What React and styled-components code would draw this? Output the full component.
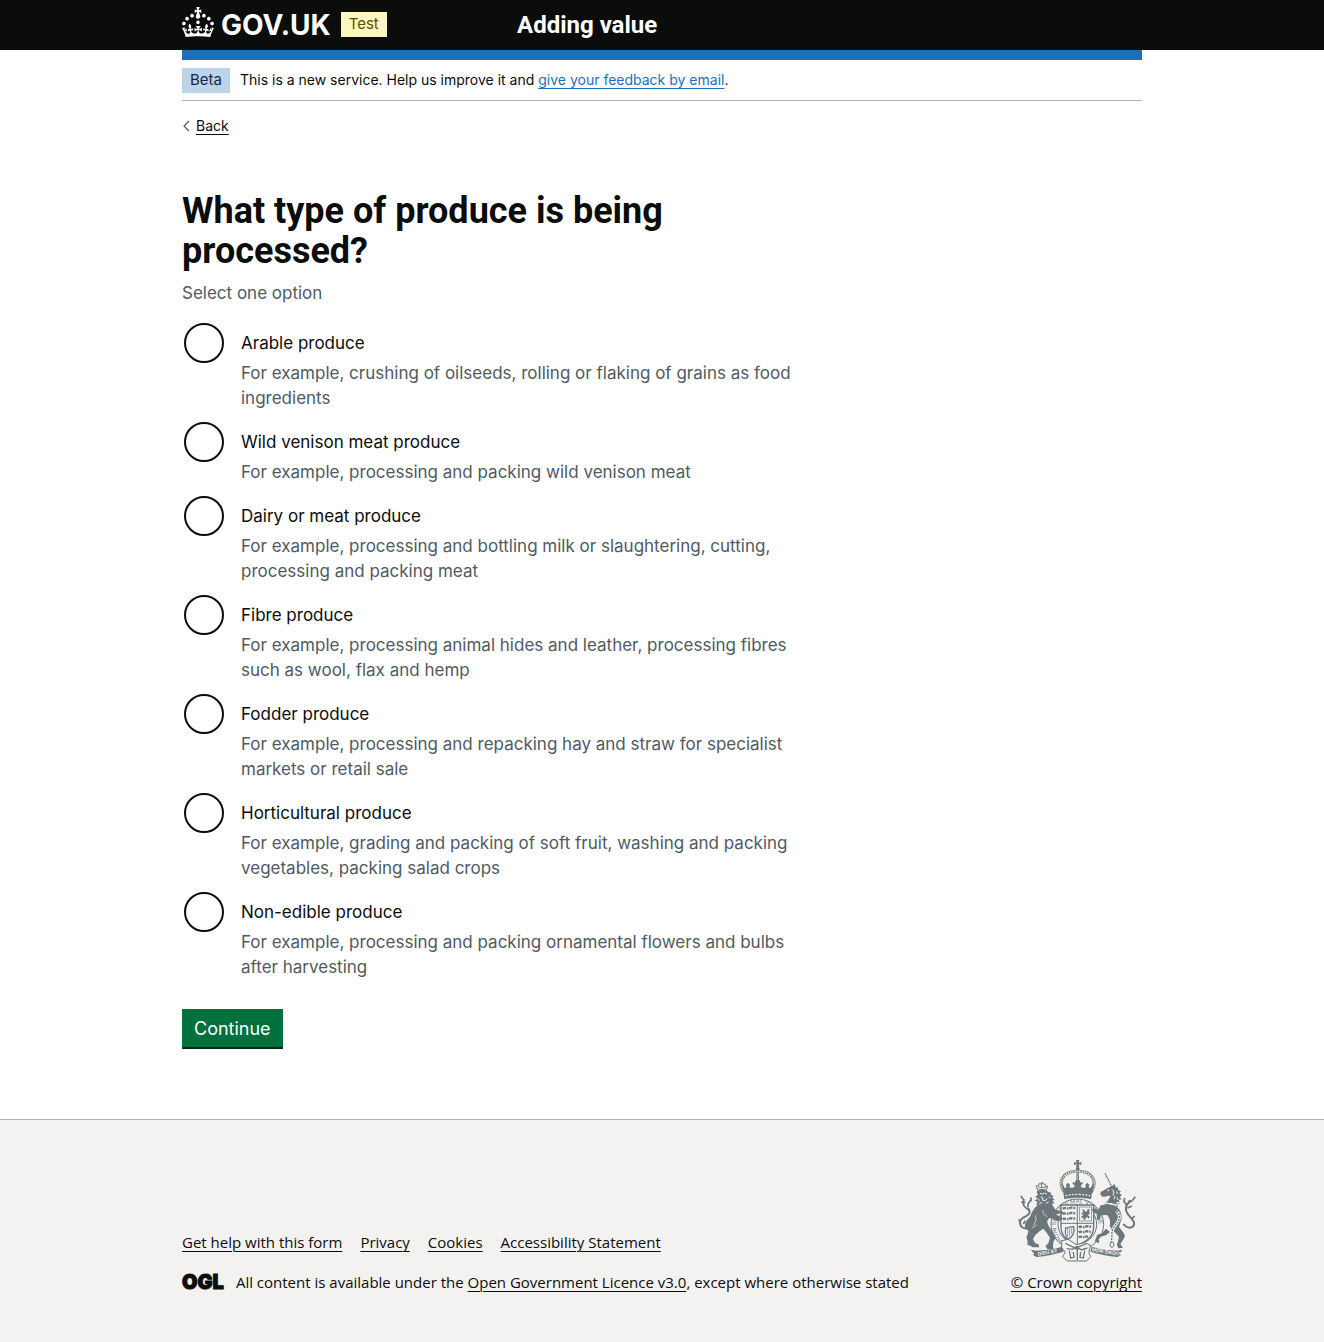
import React from "react";
import styled, { createGlobalStyle, css } from "styled-components";

const c = {
  black: "#0b0c0c",
  blue: "#1d70b8",
  grey: "#505a5f",
  border: "#b1b4b6",
  footer: "#f3f2f1",
  green: "#00703c",
  greenDark: "#002d18",
  arms: "#6b777b",
};
const sans = '"Inter", "Liberation Sans", sans-serif';
const display = '"Roboto", "Liberation Sans", sans-serif';
const footerSans = '"Open Sans", "Liberation Sans", sans-serif';

const GlobalStyle = createGlobalStyle`
  *, *::before, *::after { box-sizing: border-box; }
  body {
    margin: 0;
    background: #fff;
    color: ${c.black};
    font-family: ${sans};
    font-size: 17px;
    line-height: 25px;
  }
`;

const small = css`
  font-size: 14px;
  line-height: 20px;
`;

const Page = styled.div`
  display: flex;
  flex-direction: column;
  min-height: 100vh;
`;

const Container = styled.div`
  max-width: 960px;
  margin: 0 auto;
  @media (max-width: 1020px) {
    margin: 0 30px;
  }
`;

const Header = styled.header`
  background: ${c.black};
  color: #fff;
`;

const HeaderRow = styled(Container)`
  display: flex;
  align-items: center;
  min-height: 50px;
`;

const HeaderLogo = styled.div`
  display: flex;
  align-items: center;
  flex: 0 0 335px;
`;

const HomeLink = styled.a`
  display: flex;
  align-items: center;
  gap: 7px;
  color: #fff;
  text-decoration: none;
  svg {
    display: block;
    margin-bottom: 6px;
  }
`;

const Wordmark = styled.span`
  font-size: 28px;
  line-height: 30px;
  font-weight: 700;
`;

const ServiceName = styled.a`
  color: #fff;
  font-family: ${display};
  font-size: 24px;
  line-height: 30px;
  font-weight: 700;
  text-decoration: none;
`;

const Tag = styled.strong`
  flex: none;
  padding: 2px 8px 3px;
  font-size: 15px;
  line-height: 20px;
  font-weight: 400;
  color: ${(p) => (p.$tone === "yellow" ? "#594d00" : "#0c2d4a")};
  background: ${(p) => (p.$tone === "yellow" ? "#fff7bf" : "#bbd4ea")};
  margin: ${(p) => (p.$tone === "yellow" ? "0 0 1px 10px" : "0")};
`;

const BlueBar = styled(Container)`
  height: 10px;
  background: ${c.blue};
`;

const BlueBarWrap = styled.div`
  background: #fff;
`;

const PhaseBanner = styled.div`
  ${small}
  display: flex;
  align-items: flex-start;
  gap: 10px;
  padding: 8px 0 7px;
  border-bottom: 1px solid ${c.border};
`;

const PhaseText = styled.span`
  padding-top: 2px;
`;

const Link = styled.a`
  color: ${(p) => (p.$blue ? c.blue : c.black)};
  text-decoration: underline;
  text-decoration-thickness: 1px;
  text-underline-offset: 3px;
`;

const BackLink = styled(Link)`
  ${small}
  display: inline-flex;
  align-items: center;
  gap: 4px;
  margin-top: 15px;
  text-decoration: none;
  span {
    text-decoration: underline;
    text-decoration-thickness: 1px;
    text-underline-offset: 3px;
  }
`;

const Main = styled.main`
  display: block;
  max-width: 630px;
  padding: 51px 0 70px;
`;

const Fieldset = styled.fieldset`
  margin: 0;
  padding: 0;
  border: 0;
  min-width: 0;
`;

const Legend = styled.legend`
  padding: 0;
  margin: 0 0 10px;
`;

const Title = styled.h1`
  max-width: 600px;
  margin: 0;
  font-family: ${display};
  font-size: 36px;
  line-height: 40px;
  font-weight: 700;
`;

const Hint = styled.div`
  color: ${c.grey};
`;

const Radios = styled.div`
  display: flex;
  flex-direction: column;
  gap: 10px;
  margin: 16px 0 29px;
`;

const RadioItem = styled.div`
  display: grid;
  grid-template-columns: 44px 1fr;
  column-gap: 15px;
  grid-template-rows: 39px auto;
`;

const Radio = styled.input`
  appearance: none;
  width: 40px;
  height: 40px;
  margin: 1px 2px 0;
  border: 2px solid ${c.black};
  border-radius: 50%;
  background: #fff;
  cursor: pointer;
  &:checked {
    box-shadow: inset 0 0 0 8px #fff;
    background: ${c.black};
  }
  &:focus {
    outline: 3px solid #ffdd00;
  }
`;

const RadioLabel = styled.label`
  padding: 9px 0 5px;
  cursor: pointer;
`;

const RadioHint = styled(Hint)`
  grid-column: 2;
`;

const Button = styled.button`
  display: block;
  padding: 7px 12px 6px;
  border: 0;
  border-bottom: 2px solid ${c.greenDark};
  background: ${c.green};
  color: #fff;
  font-family: ${sans};
  font-size: 18px;
  line-height: 25px;
  cursor: pointer;
`;

const Footer = styled.footer`
  flex: 1;
  padding: 40px 0 50px;
  border-top: 1px solid ${c.border};
  background: ${c.footer};
  font-family: ${footerSans};
  font-size: 15px;
  line-height: 20px;
`;

const FooterRow = styled(Container)`
  display: flex;
  flex-wrap: wrap;
  align-items: flex-end;
  justify-content: space-between;
  gap: 20px;
`;

const FooterLinks = styled.ul`
  display: flex;
  flex-wrap: wrap;
  gap: 18px;
  margin: 0 0 20px;
  padding: 0;
  list-style: none;
`;

const Licence = styled.div`
  display: flex;
  align-items: center;
  gap: 12px;
`;

const Ogl = styled.span`
  font-family: ${sans};
  font-size: 20px;
  line-height: 20px;
  font-weight: 900;
  -webkit-text-stroke: 1px ${c.black};
`;

const Copyright = styled(Link)`
  display: flex;
  flex-direction: column;
  align-items: center;
  gap: 10px;
`;

const Crown = () => (
  <svg width="32" height="30" viewBox="0 0 32 30" fill="currentColor" aria-hidden="true">
    <path d="M22.6 10.4c-1 .4-2-.1-2.4-1-.4-.9.1-2 1-2.4.9-.4 2 .1 2.4 1s-.1 2-1 2.4m-5.9 6.7c-.9.4-2-.1-2.4-1-.4-.9.1-2 1-2.4.9-.4 2 .1 2.4 1s-.1 2-1 2.4m10.8-3.7c-1 .4-2-.1-2.4-1-.4-.9.1-2 1-2.4.9-.4 2 .1 2.4 1s0 2-1 2.4m3.3 4.8c-1 .4-2-.1-2.4-1-.4-.9.1-2 1-2.4.9-.4 2 .1 2.4 1s-.1 2-1 2.4M17 4.7l2.3 1.2V2.5l-2.3.7-.2-.2.9-3h-3.4l.9 3-.2.2c-.1.1-2.3-.7-2.3-.7v3.4L15 4.7c.1.1.1.2.2.2l-1.3 4c-.1.2-.1.4-.1.6 0 1.1.8 2 1.9 2.2h.7c1-.2 1.9-1.1 1.9-2.1 0-.2 0-.4-.1-.6l-1.3-4c-.1-.2 0-.2.1-.3m-7.6 5.7c.9.4 2-.1 2.4-1 .4-.9-.1-2-1-2.4-.9-.4-2 .1-2.4 1s0 2 1 2.4m-5 3c.9.4 2-.1 2.4-1 .4-.9-.1-2-1-2.4-.9-.4-2 .1-2.4 1s.1 2 1 2.4m-3.2 4.8c.9.4 2-.1 2.4-1 .4-.9-.1-2-1-2.4-.9-.4-2 .1-2.4 1s0 2 1 2.4m14.8 11c4.4 0 8.6.3 12.3.8 1.1-4.5 2.4-7 3.7-8.8l-2.5-.9c.2 1.3.3 1.9 0 2.7-.4-.4-.8-1.1-1.1-2.3l-1.2 4c.7-.5 1.3-.8 2-.9-1.1 2.5-2.6 3.1-3.5 3-1.1-.2-1.7-1.2-1.5-2.1.3-1.2 1.5-1.5 2.1-.1 1.1-2.3-.8-3-2-2.3 1.9-1.9 2.1-3.5.6-5.6-2.1 1.6-2.1 3.2-1.2 5.5-1.2-1.4-3.2-.6-2.5 1.6.9-1.4 2.1-.5 1.9.8-.2 1.1-1.7 2.1-3.5 1.9-2.7-.2-2.9-2.1-2.9-3.6.7-.1 1.9.5 2.9 1.9l.4-4.3c-1.1 1.1-2.1 1.4-3.2 1.4.4-1.2 2.1-3 2.1-3h-5.4s1.7 1.9 2.1 3c-1.1 0-2.1-.2-3.2-1.4l.4 4.3c1-1.4 2.2-2 2.9-1.9-.1 1.5-.2 3.4-2.9 3.6-1.9.2-3.4-.8-3.5-1.9-.2-1.3 1-2.2 1.9-.8.7-2.3-1.2-3-2.5-1.6.9-2.2.9-3.9-1.2-5.5-1.5 2-1.3 3.7.6 5.6-1.2-.7-3.1 0-2 2.3.6-1.4 1.8-1.1 2.1.1.2.9-.3 1.9-1.5 2.1-.9.2-2.4-.5-3.5-3 .6 0 1.2.3 2 .9l-1.2-4c-.3 1.1-.7 1.9-1.1 2.3-.3-.8-.2-1.4 0-2.7l-2.9.9C1.3 23 2.6 25.5 3.7 30c3.7-.5 7.9-.8 12.3-.8" />
  </svg>
);

const RoyalArms = () => (
  <svg width="125" height="102" viewBox="42 30 375 306" fill={c.arms} aria-hidden="true">
    {/* imperial crown */}
    <path d="M228 30h10l-2 8 8-2v9l-8-2 2 9h-10l2-9-8 2v-9l8 2z" />
    <circle cx="233" cy="57" r="6" />
    <g fill="none">
      <path d="M192 126C172 92 190 66 228 64M274 126C294 92 276 66 238 64" stroke={c.arms} strokeWidth="9" />
      <path d="M192 126C172 92 190 66 228 64M274 126C294 92 276 66 238 64" stroke={c.footer} strokeWidth="5" />
      <path d="M192 126C172 92 190 66 228 64M274 126C294 92 276 66 238 64" stroke={c.arms} strokeWidth="4" strokeDasharray="4 3" />
      <path d="M233 64v40" stroke={c.arms} strokeWidth="8" />
      <path d="M233 67v34" stroke={c.footer} strokeWidth="3" strokeDasharray="3 3" />
    </g>
    <path d="M184 98l6 8 4 8 6-2-2-8 6-6 6 6-2 8 8 2 8-4-2-6-4-2v-6l6 2 4-8h10l4 8 6-2v6l-4 2-2 6 8 4 8-2-2-8 6-6 6 6-2 8 6 2 4-8 6-8-4 32c-26-6-60-6-86 0z" />
    <path d="M190 128c26-6 60-6 86 0l-3 20c-24-6-56-6-80 0z" />
    <path d="M196 137c22-5 52-5 74 0" fill="none" stroke={c.footer} strokeWidth="4" strokeDasharray="6 4" />

    {/* garter */}
    <ellipse cx="232" cy="223" rx="79" ry="76" fill={c.footer} stroke={c.arms} strokeWidth="3" />
    <ellipse cx="232" cy="223" rx="58" ry="58" fill="none" stroke={c.arms} strokeWidth="3" />
    <path id="garter" d="M188 271A64 64 0 1 1 280 265" fill="none" />
    <text fontFamily="Liberation Sans, sans-serif" fontSize="18" fontWeight="400">
      <textPath href="#garter">HONI SOIT QUI MAL Y PENSE</textPath>
    </text>

    {/* shield */}
    <path d="M183 165h98v66c0 26-20 44-49 55-29-11-49-29-49-55z" fill={c.footer} stroke={c.arms} strokeWidth="4" />
    <path d="M232 165v120M183 220h98" fill="none" stroke={c.arms} strokeWidth="3" />
    <g fill="none" stroke={c.arms} strokeWidth="7" strokeDasharray="10 3 5 2">
      <path d="M188 176c8-5 12 2 20-2s12 2 20-1M188 192c8-5 12 2 20-2s12 2 20-1M188 208c8-5 12 2 20-2s12 2 20-1" />
      <path d="M236 232c8-5 12 2 20-2s12 2 20-1M236 247c8-5 12 2 20-2s10 2 16-1M236 262c8-5 12 2 20-2l8 0" />
    </g>
    <rect x="239" y="171" width="36" height="42" fill="none" stroke={c.arms} strokeWidth="2" />
    <path d="M246 178l7 1 3 6 5-1 2-8 7 3-3 5 3 6-6 5 5 5-2 7-5-6-5 3-2 6-6-2 3-6-6 3-3-4 7-7-6-3 2-4 5 2z" />
    <path d="M197 234c8 0 14-6 24-4 4 16-4 34-18 38-6-8-8-24-6-34z" fill="none" stroke={c.arms} strokeWidth="4" />
    <path d="M203 236v26M209 235v24M215 233v18" fill="none" stroke={c.arms} strokeWidth="2" />

    {/* buckle and strap */}
    <path d="M186 272l18-4 26 16 24-6 18 8-6 22 6 12-12 13h-58l-14-13 8-14-12-14z" fill={c.footer} stroke={c.arms} strokeWidth="3" />
    <path d="M196 280l30 14 32-12M200 296l18 2 12-8 14 10 18-6M208 302l4 22 10-2-2-16M254 302l-4 22-10-2 2-16M232 298v32" fill="none" stroke={c.arms} strokeWidth="4" />
    <circle cx="231" cy="294" r="6" />

    {/* lion */}
    <path d="M113 120l-4-13 7 2 1-8 6 1 3-6 4 6 6 0 0 8 7-2-4 13c-8-3-18-3-26-1z" fill={c.footer} stroke={c.arms} strokeWidth="3" />
    <path d="M117 113h20M125 98v14" fill="none" stroke={c.arms} strokeWidth="3" />
    <path d="M112 122l10-2 14 0 10 6 8 3-2 5 9 4-5 5 8 6-7 3 7 8-9 1 4 8-10-1-2 8-8-6-6 8-5-9-9 5-1-10-10 1 5-9-9-4 8-6-6-7 8-4-4-8z" />
    <path d="M120 130l8 2 5-3 8 4M122 140l7 4-2 6 8 2 7-6M114 146l5 6M118 160l8-2M138 160l8-4M146 140l5 4" fill="none" stroke={c.footer} strokeWidth="3" />
    <path d="M114 164C101 174 95 186 90 200C80 210 71 222 77 236L86 244L79 262L83 274L82 284L92 288L98 292L118 292L116 283L105 279L99 267L106 255L119 244L130 236L141 250L150 263L145 280L136 288L142 298L162 299L159 290L160 276L167 264L161 250L147 230L141 215L147 204L158 207L172 214L184 211L188 203L178 198L168 194L178 190L190 193L188 184L166 179L158 166z" />
    <path d="M106 196c4 10 2 20-6 30M130 180c-4 10 4 16 12 20M96 234l14-10" fill="none" stroke={c.footer} strokeWidth="2" />
    <g fill="none" stroke={c.arms}>
      <path d="M80 234C60 238 54 214 68 204C84 196 96 190 84 174" strokeWidth="6" />
      <path d="M86 180C74 172 64 162 72 150L62 138M76 158l-12-2M84 172c-2-10 2-16 10-22l-2-8M60 218l-3-10M70 222l6-10" strokeWidth="5" />
    </g>

    {/* unicorn */}
    <path d="M315 70l5 10 6 12 6 12 5 10" fill="none" stroke={c.arms} strokeWidth="4" strokeDasharray="5 2" />
    <path d="M302 126l16-9 12-7 6-2 8-6 3 10 8 1-1 7 9 4-5 5 8 7-7 4 6 8-9 1 3 8-8-2-3 7-14-3-12-1 4-10 6-9-7-2-10 3-8 0-6-7z" />
    <path d="M322 122l6-2M336 118l6 8-3 8 6 6-3 8M350 124l2 8M352 142l2 8" fill="none" stroke={c.footer} strokeWidth="3" />
    <path d="M318 155l16 2 18 6 6-3M314 162l40 8" fill="none" stroke={c.arms} strokeWidth="3" />
    <path d="M302 166l22-3 26 8c12 8 16 22 14 38l-7 22 14 18 4 10-8 14-6 10 8 10-14 2-4-10 6-24-10-12-12-10-6-12c4-10 0-24-8-32l-18 1-5 14-8-2 2-16-12-4-5-10 12-2 8 4z" />
    <path d="M318 236l-12 14-14 4-8 20 12 6 2-8-4-4 8-8 16-4 12-10z" />
    <path d="M348 184c14 6 12 24 4 34s-18 20-16 36l-2 22" fill="none" stroke={c.footer} strokeWidth="9" />
    <path d="M348 184c14 6 12 24 4 34s-18 20-16 36l-2 22" fill="none" stroke={c.arms} strokeWidth="4" strokeDasharray="6 3" />
    <ellipse cx="336" cy="284" rx="6" ry="8" fill="none" stroke={c.arms} strokeWidth="3" />
    <g fill="none" stroke={c.arms}>
      <path d="M370 222C384 240 404 234 402 218C400 204 374 194 378 172C380 160 388 160 390 150" strokeWidth="6" />
      <path d="M380 166l-8-12 2-10M386 158l10-6 10-12M382 174l14-6M396 206l8-8" strokeWidth="5" />
    </g>

    {/* motto scrolls */}
    <path d="M92 299l16 3c26-1 54-4 78-12l5 15c-26 7-52 13-82 16l-10-6 4-4z" />
    <path d="M367 299l-14 3c-26-1-54-4-78-12l-4 15c26 7 52 13 82 16l10-6-4-4z" />
    <g fill={c.footer} fontFamily="Liberation Sans, sans-serif" fontWeight="700" fontSize="15">
      <text x="114" y="317" transform="rotate(-9 114 317)">DIEU ET</text>
      <text x="275" y="304" transform="rotate(9 275 304)">MON DROIT</text>
    </g>
  </svg>
);

const options = [
  ["arable", "Arable produce", "For example, crushing of oilseeds, rolling or flaking of grains as food ingredients"],
  ["venison", "Wild venison meat produce", "For example, processing and packing wild venison meat"],
  ["dairy", "Dairy or meat produce", "For example, processing and bottling milk or slaughtering, cutting, processing and packing meat"],
  ["fibre", "Fibre produce", "For example, processing animal hides and leather, processing fibres such as wool, flax and hemp"],
  ["fodder", "Fodder produce", "For example, processing and repacking hay and straw for specialist markets or retail sale"],
  ["horticultural", "Horticultural produce", "For example, grading and packing of soft fruit, washing and packing vegetables, packing salad crops"],
  ["non-edible", "Non-edible produce", "For example, processing and packing ornamental flowers and bulbs after harvesting"],
];

const footerLinks = ["Get help with this form", "Privacy", "Cookies", "Accessibility Statement"];

export default function App() {
  return (
    <Page>
      <GlobalStyle />
      <Header>
        <HeaderRow>
          <HeaderLogo>
            <HomeLink href="#">
              <Crown />
              <Wordmark>GOV.UK</Wordmark>
            </HomeLink>
            <Tag $tone="yellow">Test</Tag>
          </HeaderLogo>
          <ServiceName href="#">Adding value</ServiceName>
        </HeaderRow>
        <BlueBarWrap>
          <BlueBar />
        </BlueBarWrap>
      </Header>
      <div>
        <Container>
          <PhaseBanner>
            <Tag>Beta</Tag>
            <PhaseText>
              This is a new service. Help us improve it and{" "}
              <Link $blue href="#">give your feedback by email</Link>.
            </PhaseText>
          </PhaseBanner>
          <BackLink href="#">
            <svg width="10" height="14" viewBox="0 0 10 14" fill="none" stroke={c.grey} strokeWidth="1.200" aria-hidden="true">
              <path d="M7 2L2 7l5 5" />
            </svg>
            <span>Back</span>
          </BackLink>
          <Main>
            <form onSubmit={(e) => e.preventDefault()}>
              <Fieldset aria-describedby="produce-hint">
                <Legend>
                  <Title>What type of produce is being processed?</Title>
                </Legend>
                <Hint id="produce-hint">Select one option</Hint>
                <Radios>
                  {options.map(([id, label, hint]) => (
                    <RadioItem key={id}>
                      <Radio type="radio" name="produce" id={id} value={id} aria-describedby={`${id}-hint`} />
                      <RadioLabel htmlFor={id}>{label}</RadioLabel>
                      <RadioHint id={`${id}-hint`}>{hint}</RadioHint>
                    </RadioItem>
                  ))}
                </Radios>
              </Fieldset>
              <Button type="submit">Continue</Button>
            </form>
          </Main>
        </Container>
      </div>
      <Footer>
        <FooterRow>
          <div>
            <FooterLinks>
              {footerLinks.map((t) => (
                <li key={t}>
                  <Link href="#">{t}</Link>
                </li>
              ))}
            </FooterLinks>
            <Licence>
              <Ogl>OGL</Ogl>
              <span>
                All content is available under the <Link href="#">Open Government Licence v3.0</Link>, except where
                otherwise stated
              </span>
            </Licence>
          </div>
          <Copyright href="#">
            <RoyalArms />
            <span>© Crown copyright</span>
          </Copyright>
        </FooterRow>
      </Footer>
    </Page>
  );
}
